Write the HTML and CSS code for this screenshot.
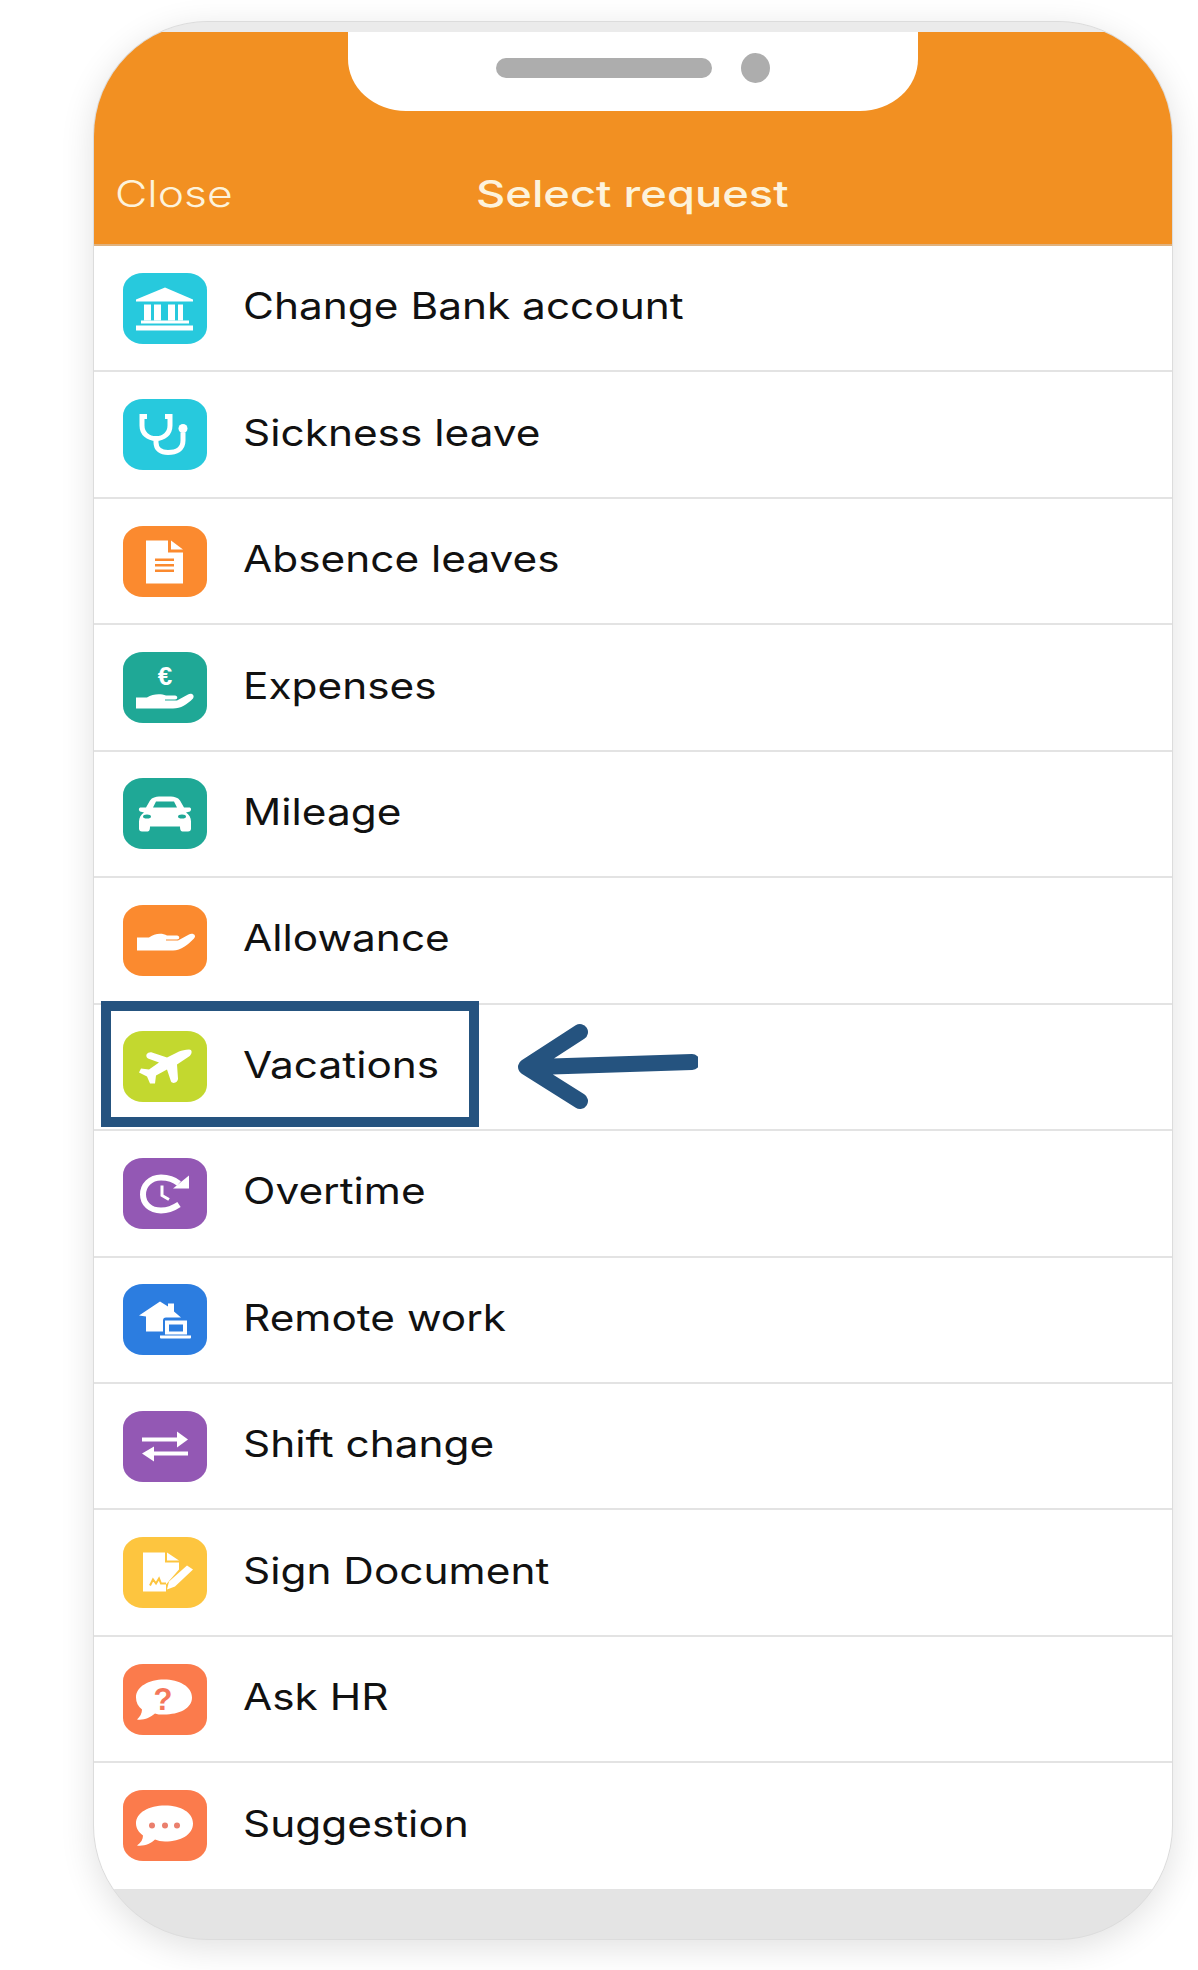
FILE: index.html
```html
<!DOCTYPE html>
<html lang="en">
	<head>
		<meta charset="UTF-8" />
		<meta name="viewport" content="width=device-width, initial-scale=1.0" />
		<title>Select request</title>
		<link rel="stylesheet" href="styles.css">
	</head>
	<body>
		<div class="phone">
			<div class="top-band"></div>
			<div class="header">
				<div class="notch">
					<span class="notch-pill"></span>
					<span class="notch-dot"></span>
				</div>
				<span class="header-close">Close</span>
				<span class="header-title">Select request</span>
			</div>

			<div class="list">
				<div class="row">
					<div class="icon teal">
						<svg viewBox="0 0 84 70"><path d="M42 14 L70 26 V28 H13 V26 Z"/><path d="M21 31h7v16h-7zM31 31h7v16h-7zM45 31h7v16h-7zM55 31h5v16h-5z"/><path d="M18 47h48v3H18zM13 52h57v5H13z"/></svg>
					</div>
					<span class="row-label">Change Bank account</span>
				</div>
				<div class="row">
					<div class="icon teal">
						<svg viewBox="0 0 84 70"><path class="line" d="M24 17 H19 V26 C19 34 25 39 33 39 C41 39 47 34 47 26 V17 H42"/><path class="line" d="M33 39 V43 C33 50 38 53 45 53 C53 53 60 50 60 41 V33"/><circle cx="60" cy="29" r="4.500"/></svg>
					</div>
					<span class="row-label">Sickness leave</span>
				</div>
				<div class="row">
					<div class="icon orange">
						<svg viewBox="0 0 84 70"><path d="M23 14 H45 V26 H60 V57 H23 Z"/><path d="M48 14 L60 23 H48 Z"/><path class="cut-orange" d="M32 32h19v2.500H32zM32 37.500h19v2.500H32zM32 43h19v2.500H32z"/></svg>
					</div>
					<span class="row-label">Absence leaves</span>
				</div>
				<div class="row">
					<div class="icon green">
						<svg viewBox="0 0 84 70"><text class="icon-text" x="42" y="32" text-anchor="middle">€</text><path d="M13 45 H24 C30 41 38 41 43 43 H52 C55 43 55 47 52 47 H42 V48 H54 L65 42 C69 40 72 43 70 46 C64 52 58 56 50 56 H13 Z"/></svg>
					</div>
					<span class="row-label">Expenses</span>
				</div>
				<div class="row">
					<div class="icon green">
						<svg viewBox="0 0 84 70"><path d="M27 22 C29 19 33 18 36 18 H48 C51 18 55 19 57 22 L61 29 H66 C68 29 69 31 67 33 L63 34 C66 36 68 39 68 43 V50 C68 52 67 53 65 53 H60 C58 53 57 52 57 48 H27 C27 52 26 53 24 53 H19 C17 53 16 52 16 50 V43 C16 39 18 36 21 34 L17 33 C15 31 16 29 18 29 H23 Z"/><path class="cut-green" d="M33 23 H51 L54 29 H30 Z"/><ellipse class="cut-green" cx="24" cy="38" rx="4" ry="2"/><ellipse class="cut-green" cx="59" cy="38" rx="4" ry="2"/></svg>
					</div>
					<span class="row-label">Mileage</span>
				</div>
				<div class="row">
					<div class="icon orange">
						<svg viewBox="0 0 84 70"><path d="M14 32 H26 C31 28 39 27 44 30 H54 C57 30 57 34 54 34 H43 V35 H55 L66 29 C70 27 74 30 71 33 C65 39 58 45 50 45 H14 Z"/></svg>
					</div>
					<span class="row-label">Allowance</span>
				</div>
				<div class="row">
					<div class="icon lime">
						<svg viewBox="0 0 84 70"><path d="M66 18 C70 18 69 23 66 25 L54 33 L55 47 C55 51 50 53 48 50 L44 38 L33 44 L32 52 L27 52 L24 45 L16 41 L18 37 L26 38 L36 31 L25 27 C21 24 25 20 29 21 L44 26 L56 20 C59 19 62 18 66 18 Z"/></svg>
					</div>
					<span class="row-label">Vacations</span>
					<div class="highlight"></div>
					<svg class="pointer" viewBox="0 0 190 90"><path d="M184 41 L28 46 M72 11 L18 46 L72 80"/></svg>
				</div>
				<div class="row">
					<div class="icon purple">
						<svg viewBox="0 0 84 70"><path class="line wide" d="M56 25 C50 20 44 19 38 19 C27 19 20 27 20 36 C20 45 27 52 38 52 C44 52 50 50 56 46"/><path d="M50 30 L66 17 V30 Z"/><path class="line thin" d="M39 27 V37 L46 41"/></svg>
					</div>
					<span class="row-label">Overtime</span>
				</div>
				<div class="row">
					<div class="icon blue">
						<svg viewBox="0 0 84 70"><path d="M16 31 L37 17 L45 22 V19 H51 V27 L58 33 H43 C41 33 40 34 40 36 V47 H23 V32 Z"/><path fill-rule="evenodd" d="M42 36 H64 V50 H42 Z M46 40 V47 H60 V40 Z"/><path d="M37 51 H68 V53 C68 54 67 54 66 54 H39 C38 54 37 54 37 53 Z"/></svg>
					</div>
					<span class="row-label">Remote work</span>
				</div>
				<div class="row">
					<div class="icon purple">
						<svg viewBox="0 0 84 70"><path d="M19 26 H54 V20 L65 28 L54 36 V30 H19 Z"/><path d="M65 40 H31 V35 L19 42 L31 50 V44 H65 Z"/></svg>
					</div>
					<span class="row-label">Shift change</span>
				</div>
				<div class="row">
					<div class="icon yellow">
						<svg viewBox="0 0 84 70"><path d="M20 15 H42 V25 H56 V32 L43 47 V54 H20 Z"/><path d="M44 15 L56 23 H44 Z"/><path d="M46 44 L64 28 L70 32 L52 49 L44 52 Z"/><path class="cut-yellow" d="M27 48 L30 42 L33 46 L36 41 L38 46 L43 46"/></svg>
					</div>
					<span class="row-label">Sign Document</span>
				</div>
				<div class="row">
					<div class="icon coral">
						<svg viewBox="0 0 84 70"><path d="M41 15 C56 15 69 22 69 33 C69 44 56 50 41 50 C37 50 34 50 32 49 C27 53 21 56 14 55 C17 52 19 49 19 45 C15 42 13 38 13 33 C13 22 26 15 41 15 Z"/><text class="icon-text coral-text" x="40" y="45" text-anchor="middle">?</text></svg>
					</div>
					<span class="row-label">Ask HR</span>
				</div>
				<div class="row">
					<div class="icon coral">
						<svg viewBox="0 0 84 70"><path d="M42 15 C58 15 70 22 70 33 C70 44 58 51 42 51 C38 51 35 50 32 49 C28 53 21 56 14 55 C18 52 20 49 20 45 C16 42 13 38 13 33 C13 22 26 15 42 15 Z"/><g class="dots"><circle cx="29" cy="35" r="3"/><circle cx="42" cy="35" r="3"/><circle cx="54" cy="35" r="3"/></g></svg>
					</div>
					<span class="row-label">Suggestion</span>
				</div>
			</div>
			<div class="footer"></div>
		</div>
	</body>
</html>
```

FILE: styles.css
```css
* {
	margin: 0;
	padding: 0;
	box-sizing: border-box;
}

body {
	font-family: Inter, "Liberation Sans", sans-serif;
	background: white;
	color: #111;
	padding: 21px 25px 30px 93px;
}

.phone {
	width: 1080px;
	height: 1919px;
	background: #e4e4e4;
	border: 1px solid #dcdcdc;
	border-radius: 115px;
	box-shadow: 0 8px 34px rgba(0, 0, 0, 0.12);
	overflow: hidden;
}

.top-band {
	height: 10px;
	background: #ebebeb;
}

.header {
	height: 214px;
	background: #f29022;
	border-bottom: 2px solid #e0b27e;
	display: flex;
	align-items: flex-end;
	padding: 0 0 28px 21px;
	position: relative;
	color: #fdf3dc;
	font-size: 37px;
}

.notch {
	position: absolute;
	top: 0;
	left: 254px;
	width: 570px;
	height: 79px;
	background: white;
	border-radius: 0 0 58px 58px / 0 0 52px 52px;
}

.notch-pill {
	position: absolute;
	top: 26px;
	left: 148px;
	width: 216px;
	height: 20px;
	border-radius: 10px;
	background: #adadad;
}

.notch-dot {
	position: absolute;
	top: 21px;
	left: 393px;
	width: 29px;
	height: 30px;
	border-radius: 50%;
	background: #adadad;
}

/* the source shot is stretched sideways, text follows it */
.header-close {
	font-weight: 300;
	width: 361px;
	transform: scaleX(1.2);
	transform-origin: left;
}

.header-title {
	font-weight: 500;
	transform: scaleX(1.225);
	transform-origin: left;
}

.list {
	background: white;
}

.row {
	height: 126.44px;
	border-bottom: 2px solid #e3e3e3;
	display: flex;
	align-items: center;
	padding-left: 29px;
	gap: 36px;
	position: relative;
	font-size: 37px;
}

.row:last-child {
	border-bottom: 1px solid #e3e3e3;
}

.row-label {
	margin-bottom: 5px;
	transform: scaleX(1.145);
	transform-origin: left;
}

.icon {
	width: 84px;
	height: 71px;
	border-radius: 20px / 17px;
	flex-shrink: 0;
}

.icon svg {
	display: block;
	width: 100%;
	height: 100%;
	fill: white;
}

.icon .line {
	fill: none;
	stroke: white;
	stroke-width: 5;
}

.icon .wide {
	stroke-width: 6;
}

.icon .thin {
	stroke-width: 3;
}

.icon-text {
	font-family: "Liberation Sans", sans-serif;
	font-size: 26px;
	font-weight: bold;
}

.icon .coral-text {
	font-size: 31px;
	fill: #f4775a;
}

.icon .dots {
	fill: #ea7f6d;
}

.icon .cut-orange {
	fill: #fb8a2f;
}

.icon .cut-green {
	fill: #1fa896;
}

.icon .cut-yellow {
	fill: none;
	stroke: #fdc53f;
	stroke-width: 2;
}

.teal {
	background: #27c9dd;
}

.orange {
	background: #fb8a2f;
}

.green {
	background: #1fa896;
}

.lime {
	background: #c3d82f;
}

.purple {
	background: #9358b4;
}

.blue {
	background: #2c7de0;
}

.yellow {
	background: #fdc53f;
}

.coral {
	background: #fb7b4c;
}

.highlight {
	position: absolute;
	top: -4px;
	left: 7px;
	width: 378px;
	height: 126px;
	border: 10px solid #25537f;
}

.pointer {
	position: absolute;
	top: 16px;
	left: 414px;
	width: 190px;
	height: 90px;
	fill: none;
	stroke: #25537f;
	stroke-width: 16;
	stroke-linecap: round;
	stroke-linejoin: round;
}
```
